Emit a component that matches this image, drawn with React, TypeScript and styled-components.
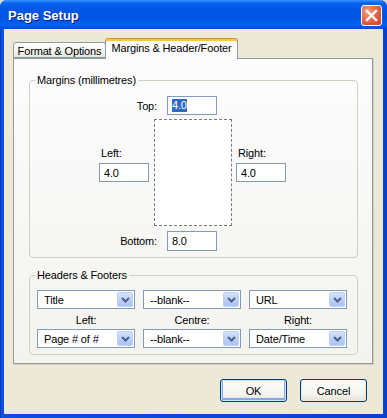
import * as React from 'react';
import styled, { createGlobalStyle } from 'styled-components';

const GlobalStyle = createGlobalStyle`
  html, body {
    margin: 0;
    padding: 0;
    background: #d8d8d8;
  }
  body {
    font-family: "Liberation Sans", Arial, sans-serif;
    font-size: 11px;
    letter-spacing: -0.15px;
    color: #000;
  }
  * {
    box-sizing: border-box;
  }
`;

const Window = styled.div`
  width: 387px;
  height: 418px;
  display: flex;
  flex-direction: column;
  border-radius: 7px 7px 0 0;
  overflow: hidden;
  background: linear-gradient(to right, #001ea0 0, #0855dd 1px, #0a4fe0 3px, #0842cf 100%);
`;

const TitleBar = styled.div`
  flex: none;
  height: 29px;
  display: flex;
  align-items: center;
  justify-content: space-between;
  padding: 1px 5px 0 8px;
  background: linear-gradient(
    to bottom,
    #3d95ff 0,
    #0a64f0 3px,
    #0058e6 8px,
    #0054e3 60%,
    #0060f0 85%,
    #0049d8 100%
  );
`;

const Title = styled.span`
  font-family: "Liberation Sans", Arial, sans-serif;
  font-weight: bold;
  font-size: 13px;
  letter-spacing: 0;
  color: #fff;
  text-shadow: 1px 1px 0 #0a1883;
`;

const CloseButton = styled.div`
  width: 21px;
  height: 21px;
  border: 1px solid #fff;
  border-radius: 3px;
  background: radial-gradient(circle at 30% 30%, #f3a286 0, #e5694a 45%, #c9401e 100%);
  display: flex;
  align-items: center;
  justify-content: center;
`;

const Client = styled.div`
  flex: 1;
  margin: 0 4px 4px 4px;
  background: #ece9d8;
  padding: 9px 0 0 9px;
  display: flex;
  flex-direction: column;
`;

const TabStrip = styled.div`
  height: 21px;
  display: flex;
  align-items: flex-end;
  margin-bottom: -1px;
  position: relative;
  z-index: 1;
`;

const Tab = styled.div<{ $active?: boolean; $w: number }>`
  width: ${(p) => p.$w}px;
  height: ${(p) => (p.$active ? 21 : 16)}px;
  margin-bottom: ${(p) => (p.$active ? 0 : 1)}px;
  margin-left: ${(p) => (p.$active ? -1 : 0)}px;
  border: 1px solid #919b9c;
  border-bottom: ${(p) => (p.$active ? 'none' : '1px solid #919b9c')};
  border-top-color: ${(p) => (p.$active ? '#e68b2c' : '#919b9c')};
  border-radius: 3px 3px 0 0;
  background: ${(p) =>
    p.$active ? '#fcfcfe' : 'linear-gradient(to bottom, #ffffff, #f3f3ef 60%, #e6e5df)'};
  box-shadow: ${(p) => (p.$active ? 'inset 0 2px 0 #ffc73c' : 'none')};
  display: flex;
  align-items: center;
  justify-content: center;
  padding-top: ${(p) => (p.$active ? 0 : 1)}px;
  padding-bottom: ${(p) => (p.$active ? 3 : 0)}px;
  white-space: nowrap;
`;

const Panel = styled.div`
  width: 360px;
  height: 306px;
  border: 1px solid #919b9c;
  background: linear-gradient(to bottom, #fcfcfe, #f4f3ee);
  box-shadow: 1px 1px 0 #d0cebf;
  padding: 15px 0 0 15px;
  display: flex;
  flex-direction: column;
`;

const Group = styled.fieldset<{ $h: number }>`
  margin: 0;
  padding: 0;
  width: 329px;
  height: ${(p) => p.$h}px;
  border: 1px solid #d0d0bf;
  border-radius: 4px;
  min-width: 0;
  & + & {
    margin-top: 11px;
  }
`;

const Legend = styled.legend`
  margin-left: 5px;
  padding: 0 2px;
  line-height: 13px;
  font-size: 11px;
`;

const LabelRow = styled.div<{ $top: number }>`
  display: flex;
  align-items: center;
  gap: 10px;
  padding-left: 67px;
  margin-top: ${(p) => p.$top}px;
`;

const SideLabel = styled.span`
  width: 60px;
  text-align: right;
`;

const Field = styled.div<{ $h?: number }>`
  width: 50px;
  height: ${(p) => p.$h ?? 19}px;
  border: 1px solid #7f9db9;
  background: #fff;
  padding-left: 4px;
  display: flex;
  align-items: center;
`;

const Selected = styled.span`
  background: #316ac5;
  color: #fff;
  line-height: 13px;
`;

const MiddleRow = styled.div`
  display: flex;
  padding-left: 69px;
  margin-top: 4px;
`;

const SideCol = styled.div`
  width: 50px;
  display: flex;
  flex-direction: column;
  gap: 3px;
  padding-top: 28px;
`;

const ColLabel = styled.span`
  padding-left: 2px;
  line-height: 13px;
`;

const Sheet = styled.div`
  width: 78px;
  height: 107px;
  margin: 0 4px 0 5px;
  border: 1px dashed #7a7a7a;
  background: #fff;
`;

const ComboGrid = styled.div`
  display: grid;
  grid-template-columns: repeat(3, 98px);
  grid-template-rows: 19px 20px 19px;
  column-gap: 8px;
  padding-left: 7px;
  margin-top: 8px;
`;

const Combo = styled.div`
  border: 1px solid #7f9db9;
  background: #fff;
  display: flex;
  align-items: center;
  justify-content: space-between;
  padding: 1px 1px 1px 6px;
`;

const ComboArrow = styled.span`
  width: 16px;
  height: 100%;
  border: 1px solid #bdd0f7;
  border-radius: 2px;
  background: linear-gradient(to bottom, #d4e2fd, #b9cdf8 60%, #aec4f5);
  display: flex;
  align-items: center;
  justify-content: center;
`;

const CaptionCell = styled.div`
  display: flex;
  align-items: center;
  justify-content: center;
  padding-top: 1px;
`;

const ButtonRow = styled.div`
  display: flex;
  justify-content: flex-end;
  gap: 13px;
  padding-right: 16px;
  margin-top: 15px;
`;

const Button = styled.div<{ $default?: boolean }>`
  width: 67px;
  height: 23px;
  border: 1px solid #003c74;
  border-radius: 3px;
  background: linear-gradient(to bottom, #ffffff, #f4f3ee 70%, #e3e0d6);
  box-shadow: ${(p) =>
    p.$default ? 'inset 0 0 0 1px #cee7ff, inset 0 -1px 0 2px #86a7e8' : 'inset 0 -1px 0 1px #e9e6dc'};
  display: flex;
  align-items: center;
  justify-content: center;
`;

const Chevron = () => (
  <svg width="9" height="6" viewBox="0 0 9 6">
    <polyline points="1,1 4.5,4.5 8,1" fill="none" stroke="#4d6185" strokeWidth="2" />
  </svg>
);

const Select = ({ value }: { value: string }) => (
  <Combo>
    <span>{value}</span>
    <ComboArrow>
      <Chevron />
    </ComboArrow>
  </Combo>
);

export default function App() {
  return (
    <>
      <GlobalStyle />
      <Window>
        <TitleBar>
          <Title>Page Setup</Title>
          <CloseButton>
            <svg width="13" height="13" viewBox="0 0 13 13">
              <path d="M2 2 L11 11 M11 2 L2 11" stroke="#fff" strokeWidth="2.4" strokeLinecap="square" />
            </svg>
          </CloseButton>
        </TitleBar>
        <Client>
          <TabStrip>
            <Tab $w={93}>Format &amp; Options</Tab>
            <Tab $w={133} $active>Margins &amp; Header/Footer</Tab>
          </TabStrip>
          <Panel>
            <Group $h={184}>
              <Legend>Margins (millimetres)</Legend>
              <LabelRow $top={9}>
                <SideLabel>Top:</SideLabel>
                <Field>
                  <Selected>4.0</Selected>
                </Field>
              </LabelRow>
              <MiddleRow>
                <SideCol>
                  <ColLabel>Left:</ColLabel>
                  <Field>4.0</Field>
                </SideCol>
                <Sheet />
                <SideCol>
                  <ColLabel>Right:</ColLabel>
                  <Field>4.0</Field>
                </SideCol>
              </MiddleRow>
              <LabelRow $top={5}>
                <SideLabel>Bottom:</SideLabel>
                <Field $h={20}>8.0</Field>
              </LabelRow>
            </Group>
            <Group $h={86}>
              <Legend>Headers &amp; Footers</Legend>
              <ComboGrid>
                <Select value="Title" />
                <Select value="--blank--" />
                <Select value="URL" />
                <CaptionCell>Left:</CaptionCell>
                <CaptionCell>Centre:</CaptionCell>
                <CaptionCell>Right:</CaptionCell>
                <Select value="Page # of #" />
                <Select value="--blank--" />
                <Select value="Date/Time" />
              </ComboGrid>
            </Group>
          </Panel>
          <ButtonRow>
            <Button $default>OK</Button>
            <Button>Cancel</Button>
          </ButtonRow>
        </Client>
      </Window>
    </>
  );
}
